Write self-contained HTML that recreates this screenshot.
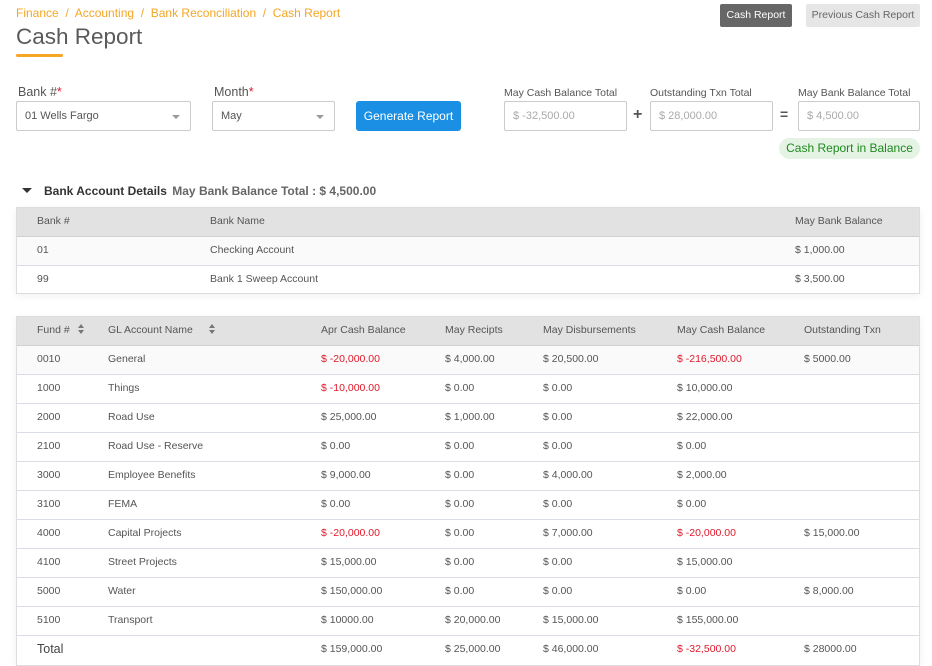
<!DOCTYPE html>
<html><head><meta charset="utf-8"><style>
*{box-sizing:border-box;margin:0;padding:0}
body{width:932px;height:656px;overflow:hidden;background:#fff;font-family:"Liberation Sans",sans-serif;color:#555;position:relative}
.a{position:absolute;white-space:nowrap}
.bc{top:6px;font-size:12px;color:#f5a623}
.lbl{font-size:12.5px;color:#555}
.in{position:absolute;border:1px solid #ccc;height:30px;background:#fff;font-size:11px;padding:0 8px;line-height:28px;border-radius:2px}
.ph{color:#aaa}
.car{position:absolute;right:10px;top:13px;border-left:4px solid transparent;border-right:4px solid transparent;border-top:4px solid #999}
.tbl{position:absolute;left:16px;width:904px;border:1px solid #ddd;box-shadow:0 2px 8px rgba(0,0,0,.06)}
.row{position:absolute;left:0;width:902px;height:29px;border-bottom:1px solid #d8dde6;font-size:10.5px;line-height:27px}
.hd{background:#e2e2e2;border-bottom:1px solid #d0d0d0}
.row span{position:absolute;top:0}
.r{color:#e0192b}
.srt{display:inline-block;margin-left:8px;vertical-align:middle;position:relative;top:-1px}
</style></head><body>
<div class="a bc" style="left:16px">Finance &nbsp;/&nbsp; Accounting &nbsp;/&nbsp; Bank Reconciliation &nbsp;/&nbsp; Cash Report</div>
<div class="a" style="left:16px;top:24px;font-size:22.5px;color:#5a5a5a">Cash Report</div>
<div class="a" style="left:16px;top:54px;width:47px;height:3px;background:#f5a623;border-radius:2px"></div>
<div class="a" style="left:720px;top:4px;width:72px;height:23px;background:#666;color:#fff;font-size:10.5px;line-height:23px;text-align:center;border-radius:2px">Cash Report</div>
<div class="a" style="left:806px;top:4px;width:114px;height:23px;background:#e6e6e6;color:#666;font-size:10.5px;line-height:23px;text-align:center;border-radius:2px">Previous Cash Report</div>

<div class="a lbl" style="left:18px;top:85px">Bank #<span style="color:#e0192b">*</span></div>
<div class="in" style="left:16px;top:101px;width:175px">01 Wells Fargo<div class="car"></div></div>
<div class="a lbl" style="left:214px;top:85px">Month<span style="color:#e0192b">*</span></div>
<div class="in" style="left:212px;top:101px;width:123px">May<div class="car"></div></div>
<div class="a" style="left:356px;top:101px;width:105px;height:30px;background:#1a8fe3;color:#fff;font-size:12px;line-height:30px;text-align:center;border-radius:3px">Generate Report</div>

<div class="a" style="left:504px;top:87px;font-size:10.5px;color:#555">May Cash Balance Total</div>
<div class="in ph" style="left:504px;top:101px;width:123px">$ -32,500.00</div>
<div class="a" style="left:633px;top:106px;font-size:16px;font-weight:bold;color:#555">+</div>
<div class="a" style="left:650px;top:87px;font-size:10.5px;color:#555">Outstanding Txn Total</div>
<div class="in ph" style="left:650px;top:101px;width:123px">$ 28,000.00</div>
<div class="a" style="left:780px;top:106px;font-size:14px;font-weight:bold;color:#555">=</div>
<div class="a" style="left:798px;top:87px;font-size:10.5px;color:#555">May Bank Balance Total</div>
<div class="in ph" style="left:798px;top:101px;width:122px">$ 4,500.00</div>
<div class="a" style="left:779px;top:138px;width:141px;height:21px;background:#e5f3e5;color:#1e8a1e;font-size:12px;line-height:21px;text-align:center;border-radius:11px">Cash Report in Balance</div>

<div class="a" style="left:22px;top:188px;border-left:5px solid transparent;border-right:5px solid transparent;border-top:5px solid #333"></div>
<div class="a" style="left:44px;top:184px;font-size:12px;font-weight:bold;color:#333">Bank Account Details <span style="font-weight:bold;color:#666;margin-left:2px">May Bank Balance Total : $ 4,500.00</span></div>

<div class="tbl" style="top:207px;height:87px">
<div class="row hd" style="top:0"><span style="left:20px">Bank #</span><span style="left:193px">Bank Name</span><span style="left:778px">May Bank Balance</span></div>
<div class="row" style="top:29px;background:#fafafa"><span style="left:20px">01</span><span style="left:193px">Checking Account</span><span style="left:778px">$ 1,000.00</span></div>
<div class="row" style="top:58px;border-bottom:none"><span style="left:20px">99</span><span style="left:193px">Bank 1 Sweep Account</span><span style="left:778px">$ 3,500.00</span></div>
</div>

<div class="tbl" style="top:316px;height:350px">
<div class="row hd" style="top:0"><span style="left:20px">Fund #<svg class="srt" width="6" height="10"><path d="M0 4L3 0L6 4ZM0 6L3 10L6 6Z" fill="#777"/></svg></span><span style="left:91px">GL Account Name<svg class="srt" style="margin-left:16px" width="6" height="10"><path d="M0 4L3 0L6 4ZM0 6L3 10L6 6Z" fill="#777"/></svg></span><span style="left:304px">Apr Cash Balance</span><span style="left:428px">May Recipts</span><span style="left:526px">May Disbursements</span><span style="left:660px">May Cash Balance</span><span style="left:787px">Outstanding Txn</span></div>
<div class="row" style="top:29px;background:#fafafa"><span style="left:20px">0010</span><span style="left:91px">General</span><span class="r" style="left:304px">$ -20,000.00</span><span style="left:428px">$ 4,000.00</span><span style="left:526px">$ 20,500.00</span><span class="r" style="left:660px">$ -216,500.00</span><span style="left:787px">$ 5000.00</span></div>
<div class="row" style="top:58px"><span style="left:20px">1000</span><span style="left:91px">Things</span><span class="r" style="left:304px">$ -10,000.00</span><span style="left:428px">$ 0.00</span><span style="left:526px">$ 0.00</span><span style="left:660px">$ 10,000.00</span></div>
<div class="row" style="top:87px"><span style="left:20px">2000</span><span style="left:91px">Road Use</span><span style="left:304px">$ 25,000.00</span><span style="left:428px">$ 1,000.00</span><span style="left:526px">$ 0.00</span><span style="left:660px">$ 22,000.00</span></div>
<div class="row" style="top:116px"><span style="left:20px">2100</span><span style="left:91px">Road Use - Reserve</span><span style="left:304px">$ 0.00</span><span style="left:428px">$ 0.00</span><span style="left:526px">$ 0.00</span><span style="left:660px">$ 0.00</span></div>
<div class="row" style="top:145px"><span style="left:20px">3000</span><span style="left:91px">Employee Benefits</span><span style="left:304px">$ 9,000.00</span><span style="left:428px">$ 0.00</span><span style="left:526px">$ 4,000.00</span><span style="left:660px">$ 2,000.00</span></div>
<div class="row" style="top:174px"><span style="left:20px">3100</span><span style="left:91px">FEMA</span><span style="left:304px">$ 0.00</span><span style="left:428px">$ 0.00</span><span style="left:526px">$ 0.00</span><span style="left:660px">$ 0.00</span></div>
<div class="row" style="top:203px"><span style="left:20px">4000</span><span style="left:91px">Capital Projects</span><span class="r" style="left:304px">$ -20,000.00</span><span style="left:428px">$ 0.00</span><span style="left:526px">$ 7,000.00</span><span class="r" style="left:660px">$ -20,000.00</span><span style="left:787px">$ 15,000.00</span></div>
<div class="row" style="top:232px"><span style="left:20px">4100</span><span style="left:91px">Street Projects</span><span style="left:304px">$ 15,000.00</span><span style="left:428px">$ 0.00</span><span style="left:526px">$ 0.00</span><span style="left:660px">$ 15,000.00</span></div>
<div class="row" style="top:261px"><span style="left:20px">5000</span><span style="left:91px">Water</span><span style="left:304px">$ 150,000.00</span><span style="left:428px">$ 0.00</span><span style="left:526px">$ 0.00</span><span style="left:660px">$ 0.00</span><span style="left:787px">$ 8,000.00</span></div>
<div class="row" style="top:290px"><span style="left:20px">5100</span><span style="left:91px">Transport</span><span style="left:304px">$ 10000.00</span><span style="left:428px">$ 20,000.00</span><span style="left:526px">$ 15,000.00</span><span style="left:660px">$ 155,000.00</span></div>
<div class="row" style="top:319px;border-bottom:none"><span style="left:20px;font-size:12.5px;color:#444">Total</span><span style="left:304px">$ 159,000.00</span><span style="left:428px">$ 25,000.00</span><span style="left:526px">$ 46,000.00</span><span class="r" style="left:660px">$ -32,500.00</span><span style="left:787px">$ 28000.00</span></div>
</div>
</body></html>
